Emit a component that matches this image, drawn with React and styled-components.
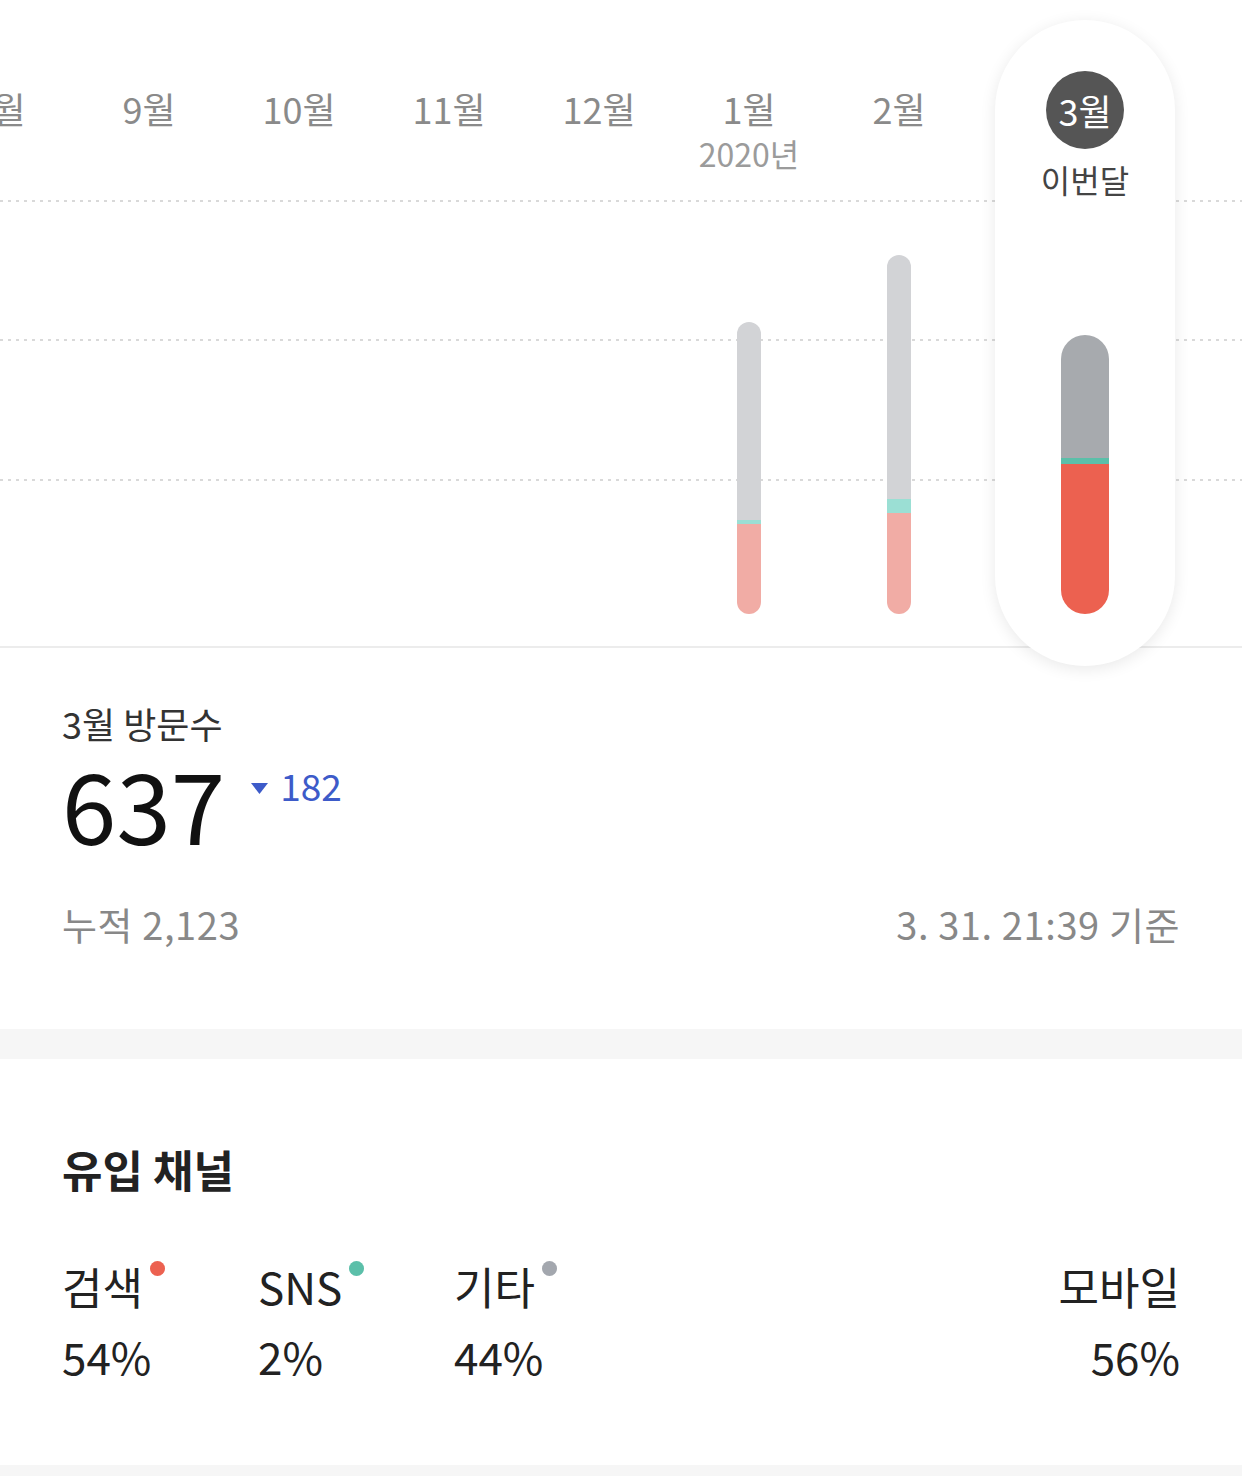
import React from 'react';
import styled, { createGlobalStyle } from 'styled-components';

const GlobalStyle = createGlobalStyle`
  html, body { margin: 0; padding: 0; background: #ffffff; }
  body {
    font-family: "Noto Sans CJK KR", "Noto Sans", sans-serif;
    -webkit-font-smoothing: antialiased;
  }
`;

const dotted = (y) =>
  `linear-gradient(to right, #d9d9d9 0 3px, transparent 3px 8px) 0 ${y}px / 8px 2px repeat-x`;

const Page = styled.div`
  width: 1242px;
  background: #ffffff;
`;

const ChartSection = styled.section`
  height: 646px;
  border-bottom: 2px solid #ececec;
  background: ${dotted(200)}, ${dotted(339)}, ${dotted(479)};
  display: flex;
  justify-content: flex-end;
  overflow-x: clip;
`;

const MonthColumn = styled.div`
  flex: 0 0 150px;
  display: flex;
  flex-direction: column;
  align-items: center;
`;

const MonthLabel = styled.div`
  margin-top: 90px;
  font-size: 36px;
  line-height: 1;
  color: #8a8a8a;
  white-space: nowrap;
`;

const YearLabel = styled.div`
  margin-top: 11px;
  font-size: 32px;
  line-height: 1;
  color: #9b9b9b;
  white-space: nowrap;
`;

const CurrentPill = styled.div`
  position: relative;
  z-index: 1;
  flex: 0 0 180px;
  align-self: flex-start;
  margin: 20px 67px 0 21px;
  height: 646px;
  border-radius: 90px;
  background: #ffffff;
  box-shadow: 0 3px 16px rgba(0, 0, 0, 0.09);
  display: flex;
  flex-direction: column;
  align-items: center;
`;

const MonthBadge = styled.div`
  margin-top: 51px;
  width: 78px;
  height: 78px;
  border-radius: 50%;
  background: #555555;
  color: #ffffff;
  font-size: 36px;
  line-height: 1;
  display: flex;
  align-items: center;
  justify-content: center;
`;

const CurrentCaption = styled.div`
  margin-top: 14px;
  font-size: 32px;
  line-height: 1;
  color: #444444;
`;

const Bar = styled.div`
  margin-top: auto;
  margin-bottom: ${(p) => (p.$current ? 52 : 32)}px;
  width: ${(p) => (p.$current ? 48 : 24)}px;
  border-radius: ${(p) => (p.$current ? 24 : 12)}px;
  overflow: hidden;
  display: flex;
  flex-direction: column;
`;

const Segment = styled.div`
  flex: ${(p) => (p.$fill ? '1 1 auto' : '0 0 auto')};
  background: ${(p) => p.$color};
`;

const StatsSection = styled.section`
  height: 381px;
  box-sizing: border-box;
  padding: 57px 62px 0;
`;

const StatTitle = styled.div`
  font-size: 36px;
  line-height: 1;
  color: #333333;
`;

const ValueRow = styled.div`
  margin-top: 12px;
  display: flex;
  align-items: flex-start;
`;

const BigValue = styled.div`
  font-size: 98px;
  line-height: 1;
  color: #111111;
  font-weight: 400;
`;

const Delta = styled.div`
  margin-left: 26px;
  margin-top: 14px;
  display: flex;
  align-items: flex-start;
  gap: 12px;
  color: #3d5bc9;
  font-size: 37px;
  line-height: 1;

  svg {
    margin-top: 16px;
  }
`;

const FooterRow = styled.div`
  margin-top: 54px;
  display: flex;
  justify-content: space-between;
  font-size: 38px;
  letter-spacing: 0.6px;
  line-height: 1;
  color: #888888;
`;

const Divider = styled.div`
  height: 30px;
  background: #f6f6f6;
`;

const ChannelSection = styled.section`
  height: 406px;
  box-sizing: border-box;
  padding: 88px 62px 0;
`;

const SectionTitle = styled.h2`
  margin: 0;
  font-size: 44px;
  line-height: 1;
  font-weight: 700;
  color: #222222;
`;

const ChannelRow = styled.div`
  margin-top: 73px;
  display: flex;
`;

const ChannelItem = styled.div`
  flex: 0 0 196px;
  display: flex;
  flex-direction: column;
  align-items: ${(p) => (p.$right ? 'flex-end' : 'flex-start')};
  ${(p) => (p.$right ? 'margin-left: auto; flex-basis: auto;' : '')}
`;

const ChannelName = styled.div`
  display: flex;
  align-items: flex-start;
  font-size: 44px;
  line-height: 1;
  color: #222222;
`;

const Dot = styled.span`
  width: 15px;
  height: 15px;
  border-radius: 50%;
  background: ${(p) => p.$color};
  margin-left: 7px;
  margin-top: -3px;
`;

const ChannelValue = styled.div`
  margin-top: 26px;
  font-size: 44px;
  line-height: 1;
  color: #222222;
`;

const BottomBand = styled.div`
  height: 11px;
  background: #f6f6f6;
`;

const LIGHT = { other: '#d2d3d6', sns: '#9bdfd4', search: '#f1aca5' };
const STRONG = { other: '#a7aaae', sns: '#5bbfa9', search: '#ec6150' };

const months = [
  { label: '8월' },
  { label: '9월' },
  { label: '10월' },
  { label: '11월' },
  { label: '12월' },
  { label: '1월', year: '2020년', bar: { total: 292, sns: 4, search: 90 } },
  { label: '2월', bar: { total: 359, sns: 14, search: 101 } },
];

const current = { label: '3월', bar: { total: 279, sns: 6, search: 150 } };

function StackedBar({ data, strong }) {
  const c = strong ? STRONG : LIGHT;
  return (
    <Bar $current={strong} style={{ height: data.total }}>
      <Segment $fill $color={c.other} />
      <Segment $color={c.sns} style={{ height: data.sns }} />
      <Segment $color={c.search} style={{ height: data.search }} />
    </Bar>
  );
}

function DownTriangle() {
  return (
    <svg width="17" height="11" viewBox="0 0 17 11" aria-hidden="true">
      <polygon points="0,0 17,0 8.5,11" fill="#3d5bc9" />
    </svg>
  );
}

const channels = [
  { name: '검색', value: '54%', color: '#ec6150' },
  { name: 'SNS', value: '2%', color: '#5bbfa9' },
  { name: '기타', value: '44%', color: '#a3a7ae' },
];

export default function App() {
  return (
    <Page>
      <GlobalStyle />
      <ChartSection>
        {months.map((m) => (
          <MonthColumn key={m.label}>
            <MonthLabel>{m.label}</MonthLabel>
            {m.year && <YearLabel>{m.year}</YearLabel>}
            {m.bar && <StackedBar data={m.bar} />}
          </MonthColumn>
        ))}
        <CurrentPill>
          <MonthBadge>{current.label}</MonthBadge>
          <CurrentCaption>이번달</CurrentCaption>
          <StackedBar data={current.bar} strong />
        </CurrentPill>
      </ChartSection>

      <StatsSection>
        <StatTitle>3월 방문수</StatTitle>
        <ValueRow>
          <BigValue>637</BigValue>
          <Delta>
            <DownTriangle />
            <span>182</span>
          </Delta>
        </ValueRow>
        <FooterRow>
          <span>누적 2,123</span>
          <span>3. 31. 21:39 기준</span>
        </FooterRow>
      </StatsSection>

      <Divider />

      <ChannelSection>
        <SectionTitle>유입 채널</SectionTitle>
        <ChannelRow>
          {channels.map((ch) => (
            <ChannelItem key={ch.name}>
              <ChannelName>
                {ch.name}
                <Dot $color={ch.color} />
              </ChannelName>
              <ChannelValue>{ch.value}</ChannelValue>
            </ChannelItem>
          ))}
          <ChannelItem $right>
            <ChannelName>모바일</ChannelName>
            <ChannelValue>56%</ChannelValue>
          </ChannelItem>
        </ChannelRow>
      </ChannelSection>

      <BottomBand />
    </Page>
  );
}
